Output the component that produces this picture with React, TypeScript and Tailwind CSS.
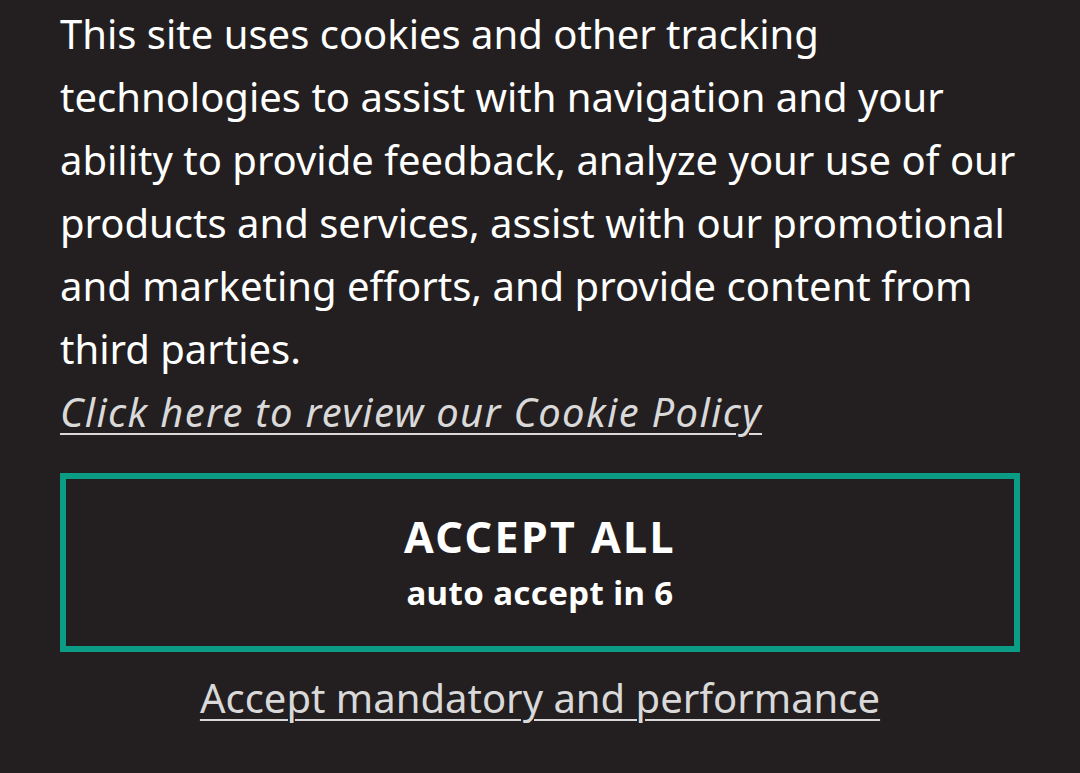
import React from "react";

export default function App() {
  return (
    <div
      className="w-[1080px] h-[773px] bg-[#231f20] overflow-hidden px-[60px] pt-[2px]"
      style={{ fontFamily: '"Noto Sans", "Open Sans", sans-serif' }}
    >
      <p className="text-[40px] leading-[63px] text-white">
        This site uses cookies and other tracking technologies to assist with navigation and your ability to provide feedback, analyze your use of our products and services, assist with our promotional and marketing efforts, and provide content from third parties.
      </p>
      <a className="block text-[40px] leading-[63px] tracking-[1.3px] text-[#d9d9d9] italic underline decoration-2 underline-offset-[6px]">
        Click here to review our Cookie Policy
      </a>
      <button className="mt-[30px] w-[960px] h-[179px] border-[6px] border-[#0b9c86] flex flex-col items-center justify-center text-white font-bold">
        <span className="text-[43px] leading-[52px] tracking-[2.4px]">ACCEPT ALL</span>
        <span className="text-[33px] leading-[44px] mt-[8px] tracking-[0.4px]">auto accept in 6</span>
      </button>
      <div className="mt-[16px] text-center">
        <a className="text-[40px] leading-[60px] text-[#d9d9d9] underline decoration-2 underline-offset-[6px]">
          Accept mandatory and performance
        </a>
      </div>
    </div>
  );
}
